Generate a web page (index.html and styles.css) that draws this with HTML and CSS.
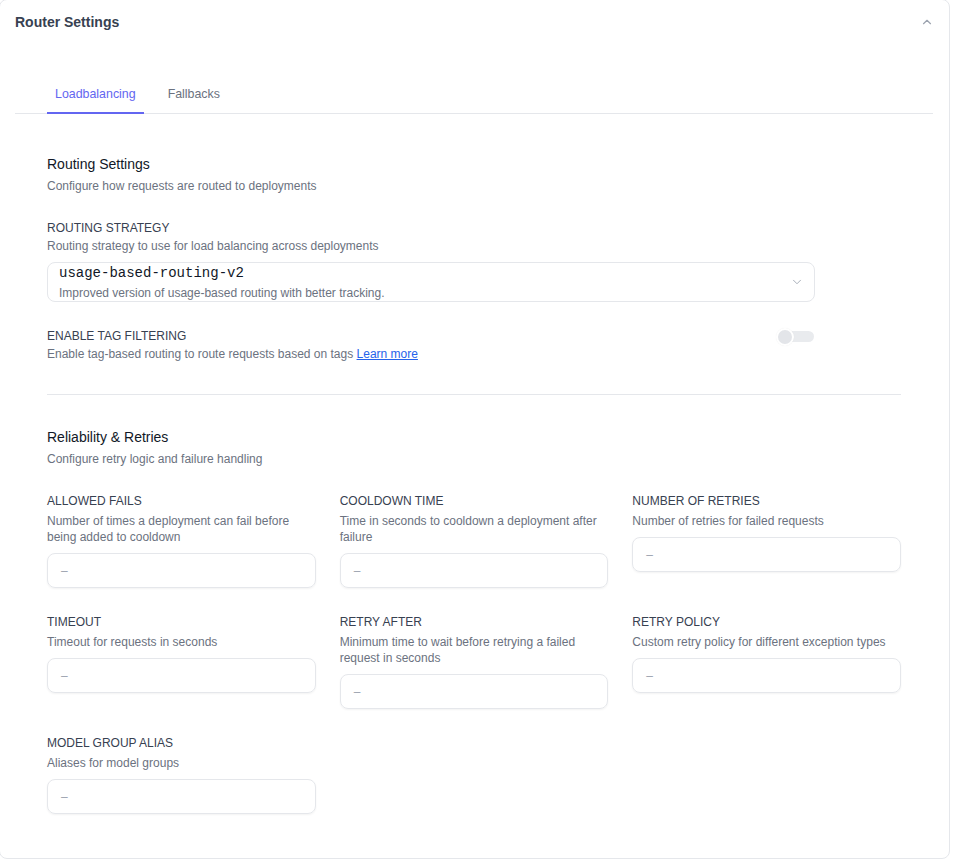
FILE: index.html
```html
<!DOCTYPE html>
<html lang="en">
<head>
  <meta charset="UTF-8" />
  <title>Router Settings</title>
  <link rel="stylesheet" href="styles.css">
</head>
<body>

<div class="card">
  <!-- accordion header -->
  <div class="card-header">
    <span class="card-title">Router Settings</span>
    <svg class="chevron-up" viewBox="0 0 24 24" width="14" height="14">
      <polyline points="6 15 12 9 18 15" />
    </svg>
  </div>

  <div class="card-body">
    <div class="tabs">
      <div class="tab active">Loadbalancing</div>
      <div class="tab">Fallbacks</div>
    </div>

    <div class="panel">
      <!-- routing -->
      <section class="section">
        <h3 class="section-title">Routing Settings</h3>
        <p class="section-desc">Configure how requests are routed to deployments</p>

        <div class="setting narrow">
          <div class="label">Routing Strategy</div>
          <div class="hint">Routing strategy to use for load balancing across deployments</div>
          <div class="select">
            <div class="select-text">
              <div class="select-value">usage-based-routing-v2</div>
              <div class="select-sub">Improved version of usage-based routing with better tracking.</div>
            </div>
            <svg class="chevron-down" viewBox="0 0 24 24" width="14" height="14">
              <polyline points="6 9 12 15 18 9" />
            </svg>
          </div>
        </div>

        <div class="setting narrow toggle-row">
          <div>
            <div class="label">Enable Tag Filtering</div>
            <div class="hint">Enable tag-based routing to route requests based on tags <a href="#">Learn more</a></div>
          </div>
          <span class="switch">
            <span class="switch-track"></span>
            <span class="switch-knob"></span>
          </span>
        </div>
      </section>

      <hr class="divider">

      <!-- retries -->
      <section class="section">
        <h3 class="section-title">Reliability &amp; Retries</h3>
        <p class="section-desc">Configure retry logic and failure handling</p>

        <div class="fields">
          <div class="field">
            <div class="label">Allowed Fails</div>
            <div class="hint">Number of times a deployment can fail before being added to cooldown</div>
            <div class="input">–</div>
          </div>
          <div class="field">
            <div class="label">Cooldown Time</div>
            <div class="hint">Time in seconds to cooldown a deployment after failure</div>
            <div class="input">–</div>
          </div>
          <div class="field">
            <div class="label">Number of Retries</div>
            <div class="hint">Number of retries for failed requests</div>
            <div class="input">–</div>
          </div>
          <div class="field">
            <div class="label">Timeout</div>
            <div class="hint">Timeout for requests in seconds</div>
            <div class="input">–</div>
          </div>
          <div class="field">
            <div class="label">Retry After</div>
            <div class="hint">Minimum time to wait before retrying a failed request in seconds</div>
            <div class="input">–</div>
          </div>
          <div class="field">
            <div class="label">Retry Policy</div>
            <div class="hint">Custom retry policy for different exception types</div>
            <div class="input">–</div>
          </div>
          <div class="field">
            <div class="label">Model Group Alias</div>
            <div class="hint">Aliases for model groups</div>
            <div class="input">–</div>
          </div>
        </div>
      </section>
    </div>
  </div>
</div>

</body>
</html>
```

FILE: styles.css
```css
body {
  font-family: 'Liberation Sans', Arial, sans-serif;
  background-color: #fff;
  margin: 0;
  padding: 0;
  color: #374151;
}

.card {
  width: 949px;
  margin: -1px 0 0 -1px;
  background: #fff;
  border: 1px solid #e5e7eb;
  border-radius: 8px;
  padding-bottom: 44px;
}

.card-header {
  height: 44px;
  display: flex;
  align-items: center;
  justify-content: space-between;
  padding: 0 15px;
}

.card-title {
  font-size: 14px;
  font-weight: bold;
  color: #374151;
}

.chevron-up,
.chevron-down {
  fill: none;
  stroke: #9ca3af;
  stroke-width: 2;
  stroke-linecap: round;
  stroke-linejoin: round;
}

.card-body {
  padding: 0 16px 0 15px;
}

.tabs {
  display: flex;
  gap: 16px;
  margin-top: 32px;
  padding-left: 32px;
  border-bottom: 1px solid #e5e7eb;
}

.tab {
  font-size: 12.4px;
  line-height: 16px;
  padding: 10px 8px;
  margin-bottom: -1px;
  color: #6b7280;
  border-bottom: 2px solid transparent;
}

.tab.active {
  color: #6366f1;
  border-bottom-color: #6366f1;
}

.panel {
  padding: 40px 32px 0;
}

.section-title {
  margin: 0;
  font-size: 14px;
  line-height: 20px;
  font-weight: normal;
  color: #111827;
}

.section-desc {
  margin: 4px 0 0;
  font-size: 12px;
  line-height: 16px;
  color: #6b7280;
}

.label {
  font-size: 12px;
  line-height: 16px;
  text-transform: uppercase;
  color: #374151;
}

.hint {
  margin-top: 2px;
  font-size: 12px;
  line-height: 16px;
  color: #6b7280;
}

.hint a {
  color: #2563eb;
}

.setting {
  margin-top: 26px;
}

.narrow {
  max-width: 768px;
}

.select {
  margin-top: 8px;
  height: 38px;
  border: 1px solid #e5e7eb;
  border-radius: 8px;
  display: flex;
  align-items: center;
  justify-content: space-between;
  padding: 0 10px 0 11px;
}

.select-value {
  font-family: 'Liberation Mono', 'Courier New', monospace;
  font-size: 14px;
  line-height: 18px;
  color: #111827;
}

.select-sub {
  margin-top: 3px;
  font-size: 12px;
  line-height: 16px;
  color: #6b7280;
}

.chevron-down {
  stroke-width: 1.5;
}

.toggle-row {
  display: flex;
  justify-content: space-between;
  align-items: flex-start;
}

.switch {
  position: relative;
  width: 38px;
  height: 16px;
  margin-right: 1px;
}

.switch-track {
  position: absolute;
  left: 6px;
  right: 0;
  top: 3px;
  height: 11px;
  border-radius: 6px;
  background: #e9ebee;
}

.switch-knob {
  position: absolute;
  left: 0;
  top: 0;
  width: 14px;
  height: 14px;
  border: 2px solid #fff;
  border-radius: 50%;
  background: #e3e5e9;
  box-shadow: 0 0 1px rgba(0, 0, 0, 0.08);
}

.divider {
  border: none;
  border-top: 1px solid #e5e7eb;
  margin: 32px 0;
}

.fields {
  display: grid;
  grid-template-columns: repeat(3, 1fr);
  column-gap: 24px;
  row-gap: 26px;
  margin-top: 26px;
  align-items: start;
}

.field .hint {
  margin-top: 4px;
}

.input {
  margin-top: 8px;
  height: 33px;
  border: 1px solid #e5e7eb;
  border-radius: 8px;
  box-shadow: 0 1px 2px rgba(0, 0, 0, 0.05);
  padding: 0 13px;
  display: flex;
  align-items: center;
  font-size: 12px;
  color: #9ca3af;
}
```
